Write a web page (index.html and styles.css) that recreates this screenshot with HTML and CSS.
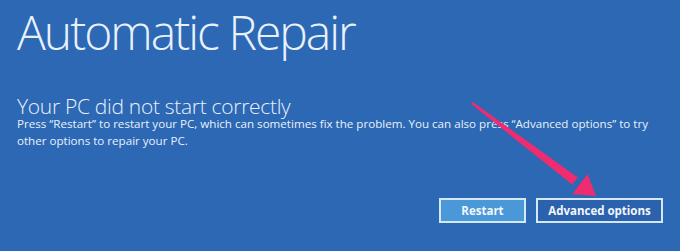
FILE: index.html
```html
<!DOCTYPE html>
<html lang="en">
<head>
<meta charset="utf-8">
<title>Automatic Repair</title>
<link rel="stylesheet" href="styles.css">
</head>
<body>
<main class="screen">
  <h1 class="title">Automatic Repair</h1>
  <h2 class="subtitle">Your PC did not start correctly</h2>
  <p class="message">Press “Restart” to restart your PC, which can sometimes fix the problem. You can also press “Advanced options” to try other options to repair your PC.</p>
  <div class="actions">
    <button class="btn btn-primary">Restart</button>
    <button class="btn btn-secondary">Advanced options</button>
  </div>
  <svg class="arrow" width="680" height="251" viewBox="0 0 680 251" aria-hidden="true">
    <polygon points="471.2,103.9 472.8,102.1 577.8,177.4 572.2,184.6" fill="#ee2c6f"/>
    <polygon points="596,196 572.4,194 587.6,174" fill="#ee2c6f"/>
  </svg>
</main>
</body>
</html>
```
FILE: styles.css
```css
html, body {
  margin: 0;
  padding: 0;
}
body {
  background: #2c68b4;
  width: 680px;
  height: 251px;
  overflow: hidden;
  font-family: "Open Sans", "Noto Sans", sans-serif;
  color: #e8f1fb;
}
.screen {
  position: relative;
  width: 680px;
  height: 251px;
  box-sizing: border-box;
  padding: 0 17px;
}
.title {
  margin: 0;
  font-size: 48px;
  line-height: 64px;
  font-weight: 300;
  letter-spacing: -2px;
}
.subtitle {
  margin: 33px 0 0 0;
  font-size: 21px;
  line-height: 19px;
  font-weight: 300;
  letter-spacing: -0.3px;
}
.message {
  margin: 0;
  font-size: 11.6px;
  line-height: 16.5px;
  font-weight: 400;
  max-width: 640px;
}
.actions {
  display: flex;
  justify-content: flex-end;
  gap: 10px;
  margin-top: 49px;
}
.btn {
  height: 25px;
  box-sizing: border-box;
  border: 2px solid #d4e8f8;
  font-family: "Open Sans", "Noto Sans", sans-serif;
  font-weight: 700;
  font-size: 11.5px;
  color: #f2f7fc;
  padding: 0;
  cursor: pointer;
}
.btn-primary {
  width: 87px;
  background: #4a98d8;
}
.btn-secondary {
  width: 127px;
  background: #2b61ad;
}
.arrow {
  position: absolute;
  left: 0;
  top: 0;
  pointer-events: none;
}
```
